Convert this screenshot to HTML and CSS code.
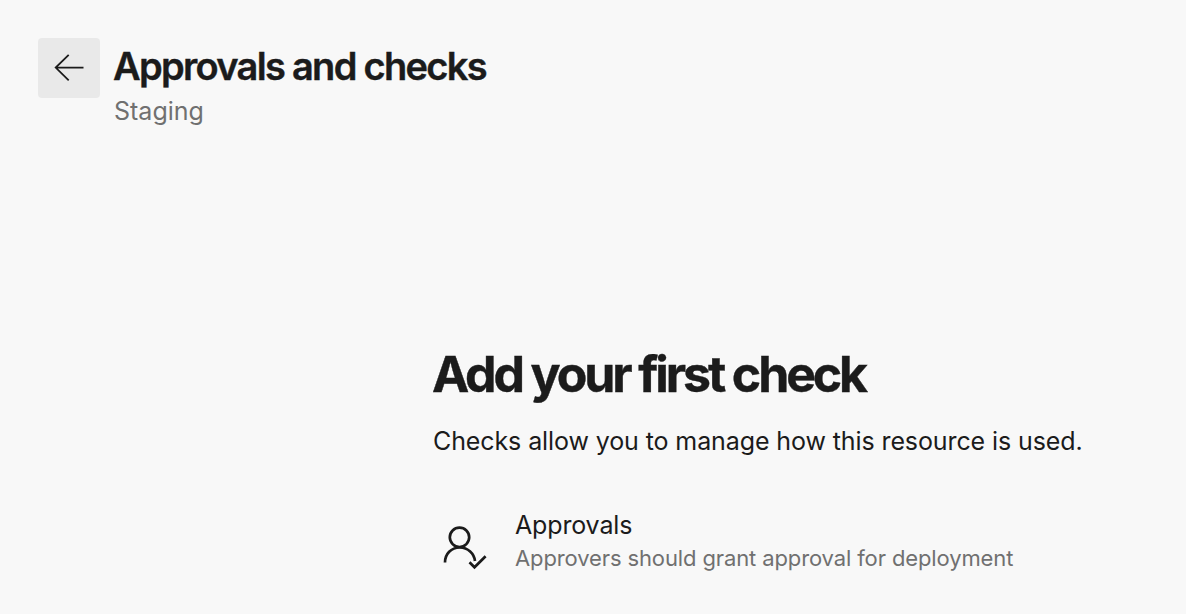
FILE: index.html
```html
<!DOCTYPE html>
<html lang="en">
<head>
<meta charset="utf-8">
<title>Approvals and checks</title>
<link rel="stylesheet" href="styles.css">
</head>
<body>
<header class="header">
  <button class="back" aria-label="Back">
    <svg width="32" height="28" viewBox="0 0 32 28" fill="none" stroke="#1b1b1b" stroke-width="1.8"><path d="M30.500 13.600H2.500M15.700 .8L2.700 13.600l13 12.800"/></svg>
  </button>
  <div class="heading">
    <h1 class="title"><span>Approvals and checks</span></h1>
    <div class="subtitle"><span>Staging</span></div>
  </div>
</header>
<main class="content">
  <h2 class="hero"><span>Add your first check</span></h2>
  <p class="lead"><span>Checks allow you to manage how this resource is used.</span></p>
  <div class="check">
    <svg class="person" width="46" height="44" viewBox="0 0 46 44" fill="none" stroke="#1b1b1b" stroke-width="2.7"><circle cx="16.500" cy="11.300" r="9.700"/><path d="M2 36.500C2 28 8.200 21.500 16.700 21.500C25 21.500 31.200 27.500 32 35M26.500 36.200l5 5.100L42.600 30.300"/></svg>
    <div class="check-text">
      <div class="check-name"><span>Approvals</span></div>
      <div class="check-desc"><span>Approvers should grant approval for deployment</span></div>
    </div>
  </div>
</main>
</body>
</html>
```
FILE: styles.css
```css
* { box-sizing: border-box; }
body { margin: 0; height: 614px; overflow: hidden; background: #f8f8f8; color: #1b1b1b; font-family: Inter, "Liberation Sans", sans-serif; white-space: nowrap; }
.header { display: flex; padding: 38px 38px 0; gap: 14px; height: 344px; }
.back { display: flex; align-items: center; justify-content: center; width: 62px; height: 60px; padding: 0; border: 0; border-radius: 4px; background: #e9e9e9; }
.title { margin: 0 0 0 -1px; padding-top: 4px; font-size: 38px; line-height: 48px; font-weight: 600; letter-spacing: -1.7px; -webkit-text-stroke: 0.4px #1b1b1b; }
.subtitle { padding-top: 5px; font-size: 25px; line-height: 32px; color: #707070; }
.content { padding-left: 433px; }
.hero { margin: 0 0 0 -1px; font-size: 50px; line-height: 60px; font-weight: 700; letter-spacing: -3.12px; -webkit-text-stroke: 0.4px #1b1b1b; }
.lead { margin: 21px 0 0; font-size: 25px; line-height: 32px; letter-spacing: -0.1px; }
.check { display: flex; margin-top: 52px; }
.person { margin: 17px 26px 0 10px; }
.check-name { font-size: 25px; line-height: 32px; letter-spacing: -0.15px; }
.check-desc { padding-top: 3px; font-size: 22px; line-height: 28px; letter-spacing: -0.12px; color: #707070; }
```
